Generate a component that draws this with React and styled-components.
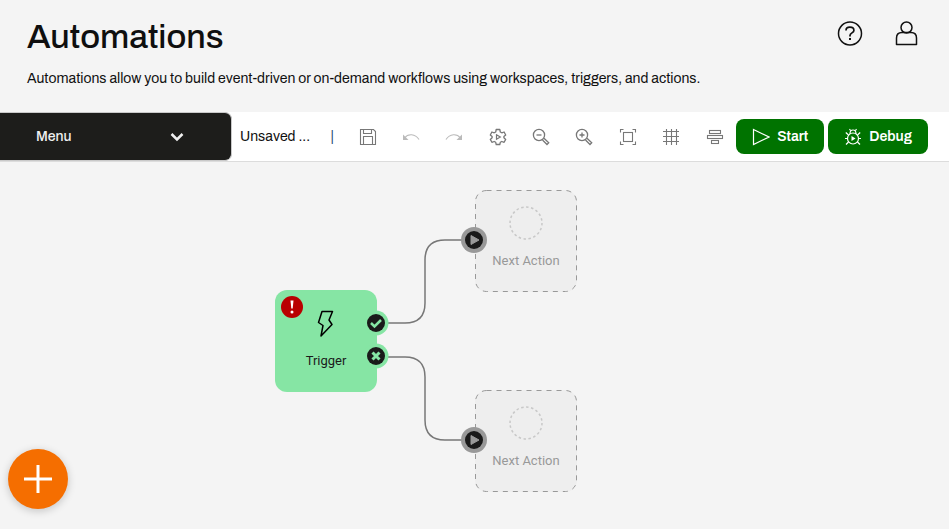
import React from "react";
import styled, { createGlobalStyle } from "styled-components";

const GlobalStyle = createGlobalStyle`
  * {
    box-sizing: border-box;
  }
  body {
    margin: 0;
    background: #f4f4f4;
    color: #0f0f0f;
    font-family: Archivo, "Liberation Sans", Arial, sans-serif;
    font-size: 14px;
  }
  button {
    font-family: inherit;
    cursor: pointer;
  }
`;

const Page = styled.div`
  display: flex;
  flex-direction: column;
  min-height: 100vh;
`;

const Header = styled.header`
  display: flex;
  justify-content: space-between;
  padding: 17px 30px 23px 27px;
`;

const Title = styled.h1`
  margin: 0;
  font-size: 34px;
  line-height: 40px;
  font-weight: 500;
`;

const Description = styled.p`
  margin: 12px 0 0;
  font-size: 14px;
  line-height: 20px;
`;

const HeaderActions = styled.div`
  display: flex;
  align-items: flex-start;
  gap: 30px;
  padding-top: 3px;
`;

const IconButton = styled.button`
  display: flex;
  align-items: center;
  justify-content: center;
  padding: 0;
  border: 0;
  background: none;
  color: ${(props) => props.$color || "#111"};
  flex: ${(props) => (props.$grow ? "1" : "none")};
  opacity: ${(props) => (props.disabled ? 0.5 : 1)};
`;

const Toolbar = styled.div`
  display: flex;
  align-items: center;
  height: 50px;
  padding-right: 21px;
  background: #fff;
  border-bottom: 1px solid #dcdcdc;
`;

const MenuButton = styled.button`
  display: flex;
  align-items: center;
  justify-content: space-between;
  width: 232px;
  height: 49px;
  padding: 0 47px 0 36px;
  border: 1px solid #c9c9c9;
  border-left: 0;
  border-radius: 0 7px 7px 0;
  background: #1d1d1b;
  color: #f0f0f0;
  font-size: 14px;
  font-weight: 500;
`;

const FlowName = styled.div`
  display: flex;
  justify-content: space-between;
  width: 114px;
  padding: 0 12px 0 8px;
  font-size: 14px;
  line-height: 20px;
`;

const Divider = styled.span`
  color: #1c4568;
`;

const Tools = styled.div`
  display: flex;
  flex: 1;
`;

const RunButtons = styled.div`
  display: flex;
  gap: 4px;
`;

const RunButton = styled.button`
  display: flex;
  align-items: center;
  gap: 7px;
  height: 35px;
  padding: 0 16px;
  border: 0;
  border-radius: 8px;
  background: #007300;
  color: #fff;
  font-size: 14px;
  font-weight: 600;
`;

const Canvas = styled.main`
  position: relative;
  flex: 1;
  min-height: 350px;
`;

const Links = styled.svg`
  position: absolute;
  top: 0;
  left: 0;
  overflow: visible;
`;

const Node = styled.div`
  position: absolute;
  left: ${(props) => props.$x}px;
  top: ${(props) => props.$y}px;
  display: flex;
  flex-direction: column;
  align-items: center;
  width: 102px;
  height: 102px;
  padding-top: 16px;
  border-radius: 12px;
  background: ${(props) => (props.$empty ? "#eee" : "#86e5a4")};
  color: ${(props) => (props.$empty ? "#999" : "#1b1b1b")};
  font-family: Roboto, sans-serif;
  font-size: 13px;
`;

const NodeFrame = styled.svg`
  position: absolute;
  top: 0;
  left: 0;
`;

const NodeLabel = styled.span`
  margin-top: 11px;
  line-height: 20px;
`;

const Badge = styled.svg`
  position: absolute;
  top: 6px;
  left: 6px;
`;

const Port = styled.svg`
  position: absolute;
  left: ${(props) => props.$x}px;
  top: ${(props) => props.$y}px;
`;

const AddButton = styled.button`
  position: fixed;
  left: 8px;
  bottom: 20px;
  display: flex;
  align-items: center;
  justify-content: center;
  width: 60px;
  height: 60px;
  padding: 0;
  border: 0;
  border-radius: 50%;
  background: #f56e00;
  box-shadow: 0 2px 8px rgba(0, 0, 0, 0.2);
`;

const Icon = ({ size = 18, width = 1.1, children }) => (
  <svg
    width={size}
    height={size}
    viewBox={`0 0 ${size} ${size}`}
    fill="none"
    stroke="currentColor"
    strokeWidth={width}
    aria-hidden="true"
  >
    {children}
  </svg>
);

const UndoShape = () => (
  <>
    <path d="M2.5 10C6 5.5 13 5.5 17 11.5" />
    <path d="M1 6.5V12H6.5Z" fill="currentColor" stroke="none" />
  </>
);

const tools = [
  {
    label: "Save",
    shape: (
      <>
        <path d="M1.5 1.5H14.5L16.5 3.5V16.5H1.5Z" />
        <path d="M4.5 1.5V5.5H12.5V1.5M4.5 16.5V8.5H13.5V16.5" />
      </>
    ),
  },
  { label: "Undo", disabled: true, shape: <UndoShape /> },
  {
    label: "Redo",
    disabled: true,
    shape: (
      <g transform="matrix(-1 0 0 1 18 0)">
        <UndoShape />
      </g>
    ),
  },
  {
    label: "Settings",
    shape: (
      <>
        <path
          d="M7.2 1.5H10.8L11.3 4L12.8 4.8L15.1 4L16.7 7L14.9 8.6V9.8L16.7 11.4L15.1 14.3L12.8 13.5L11.3 14.3L10.8 16.5H7.2L6.7 14.3L5.2 13.5L2.9 14.3L1.3 11.4L3.1 9.8V8.6L1.3 7L2.9 4L5.2 4.8L6.7 4Z"
          strokeWidth="1.3"
          strokeLinejoin="round"
        />
        <path d="M7.5 6.8L11.3 9L7.5 11.2Z" strokeWidth="1.2" />
      </>
    ),
  },
  {
    label: "Zoom out",
    shape: (
      <>
        <circle cx="7" cy="7" r="5.6" strokeWidth="1.3" />
        <path d="M4.5 7H9.5" strokeWidth="1.3" />
        <path d="M10.5 12L15 16.5L16.7 14.8L12 10.3" strokeWidth="1.3" />
      </>
    ),
  },
  {
    label: "Zoom in",
    shape: (
      <>
        <circle cx="7" cy="7" r="5.6" strokeWidth="1.3" />
        <path d="M4.5 7H9.5M7 4.5V9.5" strokeWidth="1.3" />
        <path d="M10.5 12L15 16.5L16.7 14.8L12 10.3" strokeWidth="1.3" />
      </>
    ),
  },
  {
    label: "Fit to screen",
    shape: (
      <>
        <path d="M1.5 4.5V1.5H4.5M13.5 1.5H16.5V4.5M16.5 13.5V16.5H13.5M4.5 16.5H1.5V13.5" />
        <rect x="4.5" y="4.5" width="9" height="9" />
      </>
    ),
  },
  {
    label: "Toggle grid",
    shape: <path d="M4.5 1V17M9.5 1V17M14.5 1V17M1 3.5H17M1 8.5H17M1 13.5H17" />,
  },
  {
    label: "Align",
    shape: (
      <>
        <rect x="3.5" y="2.5" width="11" height="3" />
        <rect x="1.5" y="7.5" width="15" height="3" />
        <rect x="5.5" y="12.5" width="7" height="3" />
      </>
    ),
  },
];

const NextAction = ({ x, y }) => (
  <Node $x={x} $y={y} $empty>
    <NodeFrame width="102" height="102" fill="none" stroke="#999">
      <rect x="0.5" y="0.5" width="101" height="101" rx="11" strokeDasharray="5 5" />
    </NodeFrame>
    <svg width="34" height="34" fill="none" stroke="#c8c8c8" strokeWidth="1.5">
      <circle cx="17" cy="17" r="16" strokeDasharray="2.5 2.5" />
    </svg>
    <NodeLabel>Next Action</NodeLabel>
    <Port $x={-14} $y={37} width="26" height="26">
      <circle cx="13" cy="13" r="13" fill="#999" />
      <circle cx="13" cy="13" r="9" fill="#1a1a1a" />
      <path d="M10 8.5V17.5L18 13Z" fill="#999" stroke="#999" strokeLinejoin="round" />
    </Port>
  </Node>
);

export default function App() {
  return (
    <Page>
      <GlobalStyle />
      <Header>
        <div>
          <Title>Automations</Title>
          <Description>
            Automations allow you to build event-driven or on-demand workflows using workspaces,
            triggers, and actions.
          </Description>
        </div>
        <HeaderActions>
          <IconButton aria-label="Help">
            <Icon size={26} width={1.5}>
              <circle cx="13" cy="13.5" r="11.5" />
              <path
                d="M9 10.5C9 8.2 10.5 7.2 12.9 7.2C15.3 7.2 16.9 8.4 16.9 10.4C16.9 13 13 12.8 13 15.5V16.5"
                strokeWidth="1.7"
              />
              <path d="M13 18V20" strokeWidth="2" />
            </Icon>
          </IconButton>
          <IconButton aria-label="Account">
            <Icon size={26} width={1.5}>
              <circle cx="13.5" cy="7.5" r="5.5" />
              <path
                d="M3.5 24.5V18C3.5 14.5 5.5 12.5 9 12.5H18C21.5 12.5 23.5 14.5 23.5 18V24.5Z"
                strokeLinejoin="round"
              />
            </Icon>
          </IconButton>
        </HeaderActions>
      </Header>

      <Toolbar>
        <MenuButton>
          Menu
          <svg width="14" height="10" fill="none" stroke="currentColor" strokeWidth="2.5">
            <path d="M1.5 2L7 7.5L12.5 2" />
          </svg>
        </MenuButton>
        <FlowName>
          <span>Unsaved ...</span>
          <Divider>|</Divider>
        </FlowName>
        <Tools>
          {tools.map((tool) => (
            <IconButton
              key={tool.label}
              aria-label={tool.label}
              disabled={tool.disabled}
              $color="#777"
              $grow
            >
              <Icon>{tool.shape}</Icon>
            </IconButton>
          ))}
        </Tools>
        <RunButtons>
          <RunButton>
            <Icon>
              <path d="M1.5 1.5L17 9L1.5 16.5Z" strokeWidth="1.2" />
            </Icon>
            Start
          </RunButton>
          <RunButton>
            <Icon>
              <circle cx="9" cy="10.5" r="5.5" strokeWidth="1.2" />
              <path
                d="M6 6C6 3 7 2 9 2S12 3 12 6M6.5 2.5L5.5 1M11.5 2.5L12.5 1M1 10.5H3.5M14.5 10.5H17M4.5 7L1.8 4.5M13.5 7L16.2 4.5M4.5 14L2 16.5M13.5 14L16 16.5"
                strokeWidth="1.2"
              />
              <path d="M7.5 8L11.5 10.5L7.5 13Z" fill="currentColor" stroke="none" />
            </Icon>
            Debug
          </RunButton>
        </RunButtons>
      </Toolbar>

      <Canvas>
        <Links width="600" height="340" fill="none" stroke="#777" strokeWidth="1.5">
          <path d="M387 161H405Q425 161 425 141V98Q425 78 445 78H463" />
          <path d="M387 195H405Q425 195 425 215V258Q425 278 445 278H463" />
        </Links>
        <Node $x={275} $y={128}>
          <Badge width="22" height="22">
            <circle cx="11" cy="11" r="11" fill="#b90000" />
            <path d="M9.5 4.5H12.5L11.7 12.5H10.3Z" fill="#fff" />
            <circle cx="11" cy="16" r="1.5" fill="#fff" />
          </Badge>
          <svg width="34" height="34" fill="none" stroke="#000" strokeWidth="1.5">
            <path
              d="M13 5.5H23.5L20 14L23 18.5L12 30L14 19.5L9.5 16.5Z"
              strokeLinejoin="round"
            />
          </svg>
          <NodeLabel>Trigger</NodeLabel>
          <Port $x={88} $y={20} width="26" height="26">
            <circle cx="13" cy="13" r="12.5" fill="#86e5a4" />
            <circle cx="13" cy="13" r="9" fill="#1a1a1a" />
            <path d="M8 13L11.5 16.5L18 10" fill="none" stroke="#86e5a4" strokeWidth="2.5" />
          </Port>
          <Port $x={88} $y={53} width="26" height="26">
            <circle cx="13" cy="13" r="12.5" fill="#86e5a4" />
            <circle cx="13" cy="13" r="9" fill="#1a1a1a" />
            <path d="M9.5 9.5L16.5 16.5M16.5 9.5L9.5 16.5" stroke="#86e5a4" strokeWidth="3" />
          </Port>
        </Node>
        <NextAction x={475} y={28} />
        <NextAction x={475} y={228} />
      </Canvas>

      <AddButton aria-label="Add">
        <svg width="30" height="30" stroke="#fff" strokeWidth="3">
          <path d="M15 1V29M1 15H29" />
        </svg>
      </AddButton>
    </Page>
  );
}
